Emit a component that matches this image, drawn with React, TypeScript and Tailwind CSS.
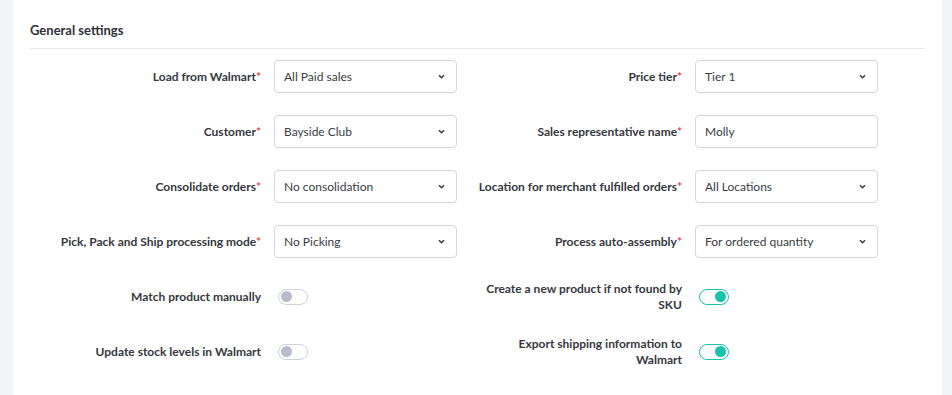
const selects = [
  [
    { label: "Load from Walmart", value: "All Paid sales", kind: "select" },
    { label: "Price tier", value: "Tier 1", kind: "select" },
  ],
  [
    { label: "Customer", value: "Bayside Club", kind: "select" },
    { label: "Sales representative name", value: "Molly", kind: "input" },
  ],
  [
    { label: "Consolidate orders", value: "No consolidation", kind: "select" },
    { label: "Location for merchant fulfilled orders", value: "All Locations", kind: "select" },
  ],
  [
    { label: "Pick, Pack and Ship processing mode", value: "No Picking", kind: "select" },
    { label: "Process auto-assembly", value: "For ordered quantity", kind: "select" },
  ],
];

const toggles = [
  [
    { label: "Match product manually", on: false },
    { label: "Create a new product if not found by SKU", on: true },
  ],
  [
    { label: "Update stock levels in Walmart", on: false },
    { label: "Export shipping information to Walmart", on: true },
  ],
];

function Chevron() {
  return (
    <svg width="7" height="5" viewBox="0 0 7 5" className="text-[#3b3d42]">
      <path d="M1 1.2 L3.5 3.7 L6 1.2" fill="none" stroke="currentColor" strokeWidth="1.6" />
    </svg>
  );
}

function Field({ label, value, kind }: { label: string; value: string; kind: string }) {
  return (
    <div className="flex items-center">
      <label className="w-[208px] text-right text-[12px] font-bold text-[#36383d] leading-4 whitespace-nowrap">
        {label}
        <span className="text-[#e5484d]">*</span>
      </label>
      <div className="ml-[13px] w-[183px] h-[33px] border border-[#d3d6db] rounded-[4px] bg-white flex items-center justify-between pl-[9px] pr-[11px] text-[12px] text-[#3b3d42]">
        <span>{value}</span>
        {kind === "select" && <Chevron />}
      </div>
    </div>
  );
}

function Toggle({ label, on }: { label: string; on: boolean }) {
  return (
    <div className="flex items-center min-h-[33px]">
      <label className="w-[208px] text-right text-[12px] font-bold text-[#36383d] leading-[16px]">
        {label}
      </label>
      <div
        className={`ml-[17px] w-[30px] h-[16px] rounded-full border bg-white flex items-center px-[2px] ${
          on ? "border-[#18c2ac] justify-end" : "border-[#cfd1d8] justify-start"
        }`}
      >
        <div className={`w-[11px] h-[11px] rounded-full ${on ? "bg-[#18c2ac]" : "bg-[#b9bbcc]"}`} />
      </div>
    </div>
  );
}

export default function App() {
  return (
    <div className="w-[952px] h-[395px] bg-[#f2f3f5] flex" style={{ fontFamily: "Lato, 'Liberation Sans', sans-serif" }}>
      <main className="ml-[13px] w-[929px] h-full bg-white px-[17px] pt-[20px]">
        <h2 className="text-[13px] font-bold text-[#2f3136] leading-5">General settings</h2>
        <div className="mt-[8px] border-b border-[#e6e8eb]" />
        <div className="mt-[11px] flex flex-col gap-[22px]">
          {selects.map((row, i) => (
            <div key={i} className="grid grid-cols-[421px_1fr] pl-[23px]">
              {row.map((f) => (
                <Field key={f.label} {...f} />
              ))}
            </div>
          ))}
          {toggles.map((row, i) => (
            <div key={i} className="grid grid-cols-[421px_1fr] pl-[23px]">
              {row.map((t) => (
                <Toggle key={t.label} {...t} />
              ))}
            </div>
          ))}
        </div>
      </main>
    </div>
  );
}
